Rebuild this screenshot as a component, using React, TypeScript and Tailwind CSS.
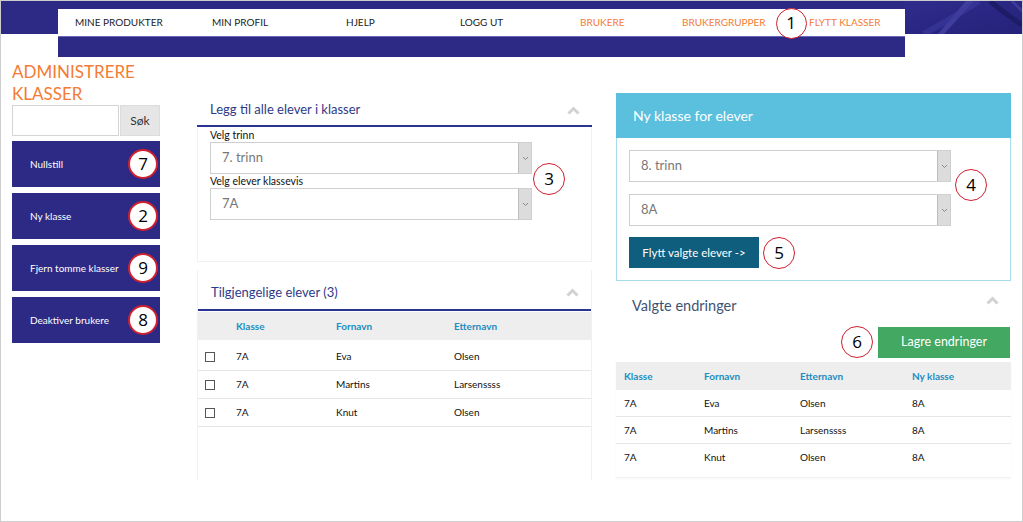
import React from "react";

const BLUE = "bg-[#2d2a85]";

function Circle({ n, x, y, size = 30, thick = false }: { n: string; x: number; y: number; size?: number; thick?: boolean }) {
  return (
    <div
      className={`absolute flex items-center justify-center rounded-full bg-white text-black ${thick ? "border-2" : "border-[1.5px]"} border-[#d0202f] text-[17px] font-['Open_Sans',sans-serif]`}
      style={{ left: x - size / 2, top: y - size / 2, width: size, height: size }}
    >
      {n}
    </div>
  );
}

function ChevronUp() {
  return (
    <svg width="13" height="9" viewBox="0 0 13 9" className="shrink-0">
      <polyline points="1.5,7.5 6.5,2.5 11.5,7.5" fill="none" stroke="#d2d2d2" strokeWidth="3" />
    </svg>
  );
}

function Select({ value, w }: { value: string; w: string }) {
  return (
    <div className={`flex h-[32px] ${w} border border-[#cfcfcf] bg-white`}>
      <div className="flex flex-1 items-center px-[11px] text-[13px] text-[#777]">{value}</div>
      <div className="flex w-[13px] items-center justify-center border-l border-[#bdbdbd] bg-[#dcdcdc]">
        <svg width="7" height="5" viewBox="0 0 7 5">
          <polyline points="1,1 3.5,3.5 6,1" fill="none" stroke="#888" strokeWidth="1" />
        </svg>
      </div>
    </div>
  );
}

const navItems: { t: string; w: string; orange?: boolean }[] = [
  { t: "MINE PRODUKTER", w: "w-[137px]" },
  { t: "MIN PROFIL", w: "w-[134px]" },
  { t: "HJELP", w: "w-[114px]" },
  { t: "LOGG UT", w: "w-[120px]" },
  { t: "BRUKERE", w: "w-[102px]", orange: true },
  { t: "BRUKERGRUPPER", w: "w-[127px]", orange: true },
  { t: "FLYTT KLASSER", w: "w-[110px]", orange: true },
];

const students = [
  { k: "7A", f: "Eva", e: "Olsen" },
  { k: "7A", f: "Martins", e: "Larsenssss" },
  { k: "7A", f: "Knut", e: "Olsen" },
];

const leftButtons = ["Nullstill", "Ny klasse", "Fjern tomme klasser", "Deaktiver brukere"];

export default function App() {
  return (
    <div className="relative h-[522px] w-[1023px] overflow-hidden border border-[#cdcdcd] bg-white font-['Lato',sans-serif] text-[#222]">
      {/* Header */}
      <div className="relative h-[56px] pt-[8px]">
        <div className={`absolute inset-x-0 top-0 h-[33px] ${BLUE}`}>
          <svg className="absolute right-0 top-0" width="118" height="33" viewBox="0 0 118 33">
            <defs>
              <linearGradient id="g1" x1="0" y1="0" x2="1" y2="1">
                <stop offset="0" stopColor="#2f2c8c" />
                <stop offset="1" stopColor="#25227a" />
              </linearGradient>
            </defs>
            <rect width="118" height="33" fill="url(#g1)" />
            <path d="M34 33 L62 0 L70 0 L40 33 Z" fill="#4a48a8" opacity="0.7" />
            <path d="M20 33 Q 60 10 75 0" stroke="#3c3a9c" strokeWidth="6" fill="none" opacity="0.6" />
            <path d="M86 0 Q 100 12 118 24" stroke="#1c1a60" strokeWidth="5" fill="none" opacity="0.8" />
            <path d="M108 0 L118 10" stroke="#4a48a8" strokeWidth="3" fill="none" opacity="0.6" />
          </svg>
        </div>
        <div className="relative ml-[57px] w-[847px]">
          <div className="flex h-[27px] items-center bg-white pl-[17px] text-[10px]">
            {navItems.map((n) => (
              <div key={n.t} className={`${n.w} shrink-0 whitespace-nowrap ${n.orange ? "text-[#f47b35]" : "text-[#222]"}`}>
                {n.t}
              </div>
            ))}
          </div>
          <div className={`h-[21px] ${BLUE} border-t border-[#6b69b5]`} />
        </div>
        <Circle n="1" x={790} y={22} size={31} />
      </div>

      {/* Main */}
      <div className="flex h-[465px] pl-[11px]">
        {/* Left column */}
        <div className="relative w-[148px] shrink-0">
          <div className="pt-[4px] text-[17px] uppercase leading-[22px] text-[#f47b35]">
            Administrere
            <br />
            Klasser
          </div>
          <div className="flex h-[31px]">
            <div className="w-[107px] border border-[#d4d4d4] bg-white" />
            <div className="ml-[1px] flex w-[40px] items-center justify-center border border-[#dcdcdc] bg-[#e6e6e6] text-[12px] text-[#333]">
              Søk
            </div>
          </div>
          <div className="mt-[5px] flex flex-col gap-[6px]">
            {leftButtons.map((b, i) => (
              <div key={b} className={`relative flex h-[46px] items-center ${BLUE} pl-[18px] text-[10px] text-white`}>
                {b}
                <Circle n={["7", "2", "9", "8"][i]} x={131} y={23} size={30} thick />
              </div>
            ))}
          </div>
        </div>

        {/* Middle column */}
        <div className="relative ml-[37px] w-[395px] shrink-0 pt-[38px]">
          <div className="flex h-[32px] items-center justify-between border-b-2 border-[#283593] pl-[13px] pr-[12px]">
            <span className="text-[13px] text-[#2e3a87]">Legg til alle elever i klasser</span>
            <ChevronUp />
          </div>
          <div className="border-x border-b border-[#f1f1f1] px-[12px] pb-[41px] pt-[2px]">
            <div className="text-[10.5px] leading-[13px] text-[#111]">Velg trinn</div>
            <Select value="7. trinn" w="w-[322px]" />
            <div className="pt-[1px] text-[10.5px] leading-[13px] text-[#111]">Velg elever klassevis</div>
            <Select value="7A" w="w-[322px]" />
          </div>
          <Circle n="3" x={352} y={122} size={32} />

          <div className="mt-[8px] h-[210px] border-x border-[#f1f1f1]">
            <div className="flex items-center justify-between border-b-2 border-[#283593] pb-[8px] pl-[13px] pr-[12px] pt-[14px]">
              <span className="text-[13px] leading-[17px] text-[#2e3a87]">Tilgjengelige elever (3)</span>
              <ChevronUp />
            </div>
            <div className="mt-[1px] flex h-[28px] items-center bg-[#eeeeee] text-[10px] font-bold text-[#1d8dc2]">
              <div className="w-[38px]" />
              <div className="w-[100px]">Klasse</div>
              <div className="w-[118px]">Fornavn</div>
              <div>Etternavn</div>
            </div>
            <div className="mt-[3px]">
              {students.map((s) => (
                <div key={s.f} className="flex h-[28px] items-center border-b border-[#e6e6e6] text-[10px] text-[#111]">
                  <div className="w-[38px] pl-[7px]">
                    <div className="h-[10px] w-[10px] border border-[#555] bg-white" />
                  </div>
                  <div className="w-[100px]">{s.k}</div>
                  <div className="w-[118px]">{s.f}</div>
                  <div>{s.e}</div>
                </div>
              ))}
            </div>
          </div>
        </div>

        {/* Right column */}
        <div className="relative ml-[24px] w-[395px] shrink-0 pt-[36px]">
          <div className="flex h-[45px] items-center bg-[#5bc0de] pl-[17px] text-[14px] text-white">Ny klasse for elever</div>
          <div className="border-x border-b border-[#a8dcea] px-[12px] pb-[12px] pt-[12px]">
            <Select value="8. trinn" w="w-[322px]" />
            <div className="h-[12px]" />
            <Select value="8A" w="w-[322px]" />
            <div className="mt-[11px] flex h-[31px] w-[130px] items-center justify-center bg-[#0f5e7d] text-[11.5px] text-white">
              Flytt valgte elever -&gt;
            </div>
          </div>
          <Circle n="4" x={355} y={128} size={32} />
          <Circle n="5" x={163} y={196} size={32} />

          <div className="flex h-[46px] items-center justify-between pl-[16px] pr-[12px] pt-[4px]">
            <span className="text-[14.5px] text-[#3e5373]">Valgte endringer</span>
            <div className="-mt-[12px]">
              <ChevronUp />
            </div>
          </div>
          <div className="relative flex justify-end pr-[1px]">
            <div className="flex h-[31px] w-[132px] items-center justify-center bg-[#43a862] text-[12.5px] text-white">
              Lagre endringer
            </div>
            <Circle n="6" x={241} y={15} size={32} />
          </div>
          <div className="mt-[4px] border-b border-[#f1f1f1] pb-[6px] shadow-[0_1px_2px_rgba(0,0,0,0.04)]">
            <div className="flex h-[28px] items-center bg-[#eeeeee] pl-[8px] text-[10px] font-bold text-[#1d8dc2]">
              <div className="w-[80px]">Klasse</div>
              <div className="w-[96px]">Fornavn</div>
              <div className="w-[112px]">Etternavn</div>
              <div>Ny klasse</div>
            </div>
            {students.map((s, i) => (
              <div key={s.f} className={`flex h-[27px] items-center pl-[8px] text-[10px] text-[#111] ${i < 2 ? "border-b border-[#e6e6e6]" : ""}`}>
                <div className="w-[80px]">{s.k}</div>
                <div className="w-[96px]">{s.f}</div>
                <div className="w-[112px]">{s.e}</div>
                <div>8A</div>
              </div>
            ))}
          </div>
        </div>
      </div>
    </div>
  );
}
